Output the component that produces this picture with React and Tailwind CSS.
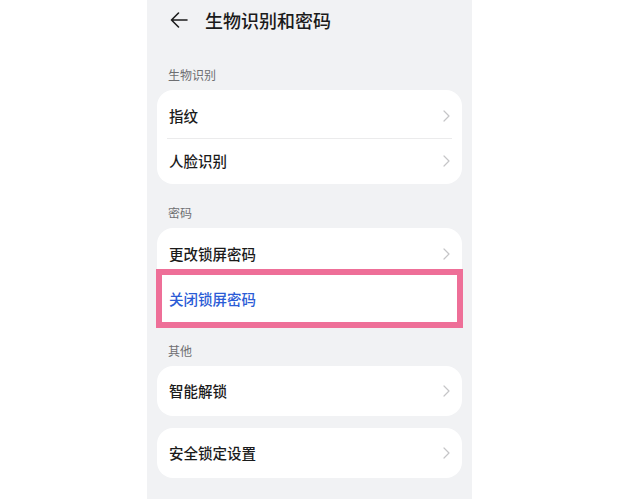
const font = { fontFamily: '"Noto Sans CJK SC", "Noto Sans", sans-serif' }

function Chevron() {
  return (
    <svg width="7" height="12" viewBox="0 0 7 12" fill="none" className="shrink-0">
      <path d="M1 1l5 5-5 5" stroke="#c5c5c7" strokeWidth="1.2" strokeLinecap="round" strokeLinejoin="round" />
    </svg>
  )
}

function Row({ label, h = 'h-[44px]', arrow = true, blue = false }) {
  return (
    <div className={`flex items-center justify-between pl-3 pr-[12px] ${h}`}>
      <span className={`text-[14.5px] font-medium ${blue ? 'text-[#2b5cd6]' : 'text-[#1b1b1b]'}`}>{label}</span>
      {arrow && <Chevron />}
    </div>
  )
}

function SectionLabel({ children }) {
  return (
    <div className="mt-[21px] mb-[7px] h-4 pl-[11px] text-[12px] leading-4 text-[#6e6f72]">{children}</div>
  )
}

export default function App() {
  return (
    <div className="flex w-full h-[499px] bg-white overflow-hidden pl-[147px]" style={font}>
      <div className="w-[325px] h-full bg-[#f1f2f4] px-[10px]">
        {/* Header */}
        <div className="flex items-center h-10 pl-[13px]">
          <svg width="18" height="16" viewBox="0 0 18 16" fill="none">
            <path d="M17 8H1.5M8.5 1L1.5 8l7 7" stroke="#1d1d1d" strokeWidth="1.6" strokeLinecap="round" strokeLinejoin="round" />
          </svg>
          <span className="ml-[17px] text-[18px] font-medium text-[#1b1b1b]">生物识别和密码</span>
        </div>

        <div className="mt-[27px] mb-[7px] h-4 pl-[11px] text-[12px] leading-4 text-[#6e6f72]">生物识别</div>
        <div className="bg-white rounded-2xl pt-1 pb-px">
          <Row label="指纹" />
          <div className="mx-[10px] h-px bg-[#ebebec]" />
          <Row label="人脸识别" />
        </div>

        <SectionLabel>密码</SectionLabel>
        <div className="bg-white rounded-t-2xl pt-1">
          <Row label="更改锁屏密码" />
          <div className="relative bg-white">
            <Row label="关闭锁屏密码" h="h-[46px]" arrow={false} blue />
            <div className="absolute -top-[7px] -bottom-[6px] -left-px -right-px border-[6px] border-[#ee6f98]" />
          </div>
        </div>

        <SectionLabel>其他</SectionLabel>
        <div className="bg-white rounded-2xl">
          <Row label="智能解锁" h="h-[50px]" />
        </div>
        <div className="bg-white rounded-2xl mt-3">
          <Row label="安全锁定设置" h="h-[50px]" />
        </div>
      </div>
    </div>
  )
}
